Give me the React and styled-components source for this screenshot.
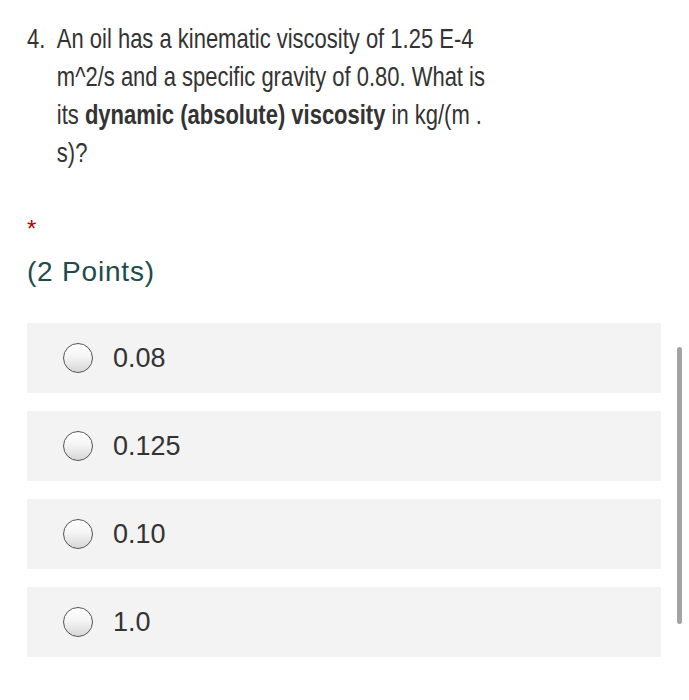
import styled, { createGlobalStyle } from "styled-components";

const GlobalStyle = createGlobalStyle`
  html, body {
    margin: 0;
    padding: 0;
    background: #ffffff;
  }
  body {
    font-family: "Liberation Sans", Arial, sans-serif;
  }
`;

const Page = styled.div`
  position: relative;
  width: 689px;
  height: 700px;
  overflow: hidden;
  padding: 20px 28px 0 27px;
  box-sizing: border-box;
`;

// the question type is a tall, condensed face in the original
const Question = styled.div`
  display: flex;
  font-size: 28px;
  line-height: 38px;
  color: #333333;
  transform: scaleX(0.785);
  transform-origin: left top;
`;

const Number = styled.span`
  width: 38px;
  flex-shrink: 0;
`;

const QuestionText = styled.div`
  flex: 1;
  white-space: nowrap;
  b {
    font-weight: 700;
  }
`;

const Required = styled.div`
  margin-top: 46px;
  color: #c00000;
  font-size: 24px;
  line-height: 22px;
  height: 22px;
`;

const Points = styled.div`
  margin-top: 17px;
  color: #1e4b4b;
  font-size: 28px;
  letter-spacing: 0.8px;
  line-height: 30px;
`;

const Options = styled.div`
  display: flex;
  flex-direction: column;
  gap: 18px;
  margin-top: 36px;
`;

const Option = styled.label`
  display: flex;
  align-items: center;
  height: 70px;
  background: #f3f3f3;
  padding-left: 36px;
  font-size: 27px;
  color: #333333;
`;

const Radio = styled.span`
  width: 28px;
  height: 28px;
  border-radius: 50%;
  border: 1.5px solid #555555;
  background: linear-gradient(180deg, #ffffff 0%, #f4f4f4 45%, #d8d8d8 100%);
  margin-right: 20px;
  flex-shrink: 0;
`;

const Scrollbar = styled.div`
  position: absolute;
  left: 677px;
  top: 347px;
  width: 5px;
  height: 277px;
  border-radius: 3px;
  background: #a3a3a3;
`;

const answers = ["0.08", "0.125", "0.10", "1.0"];

export default function App() {
  return (
    <Page>
      <GlobalStyle />
      <Question>
        <Number>4.</Number>
        <QuestionText>
          An oil has a kinematic viscosity of 1.25 E-4
          <br />
          m^2/s and a specific gravity of 0.80. What is
          <br />
          its <b>dynamic (absolute) viscosity</b> in kg/(m .
          <br />
          s)?
        </QuestionText>
      </Question>
      <Required>*</Required>
      <Points>(2 Points)</Points>
      <Options>
        {answers.map((a) => (
          <Option key={a}>
            <Radio />
            {a}
          </Option>
        ))}
      </Options>
      <Scrollbar />
    </Page>
  );
}
